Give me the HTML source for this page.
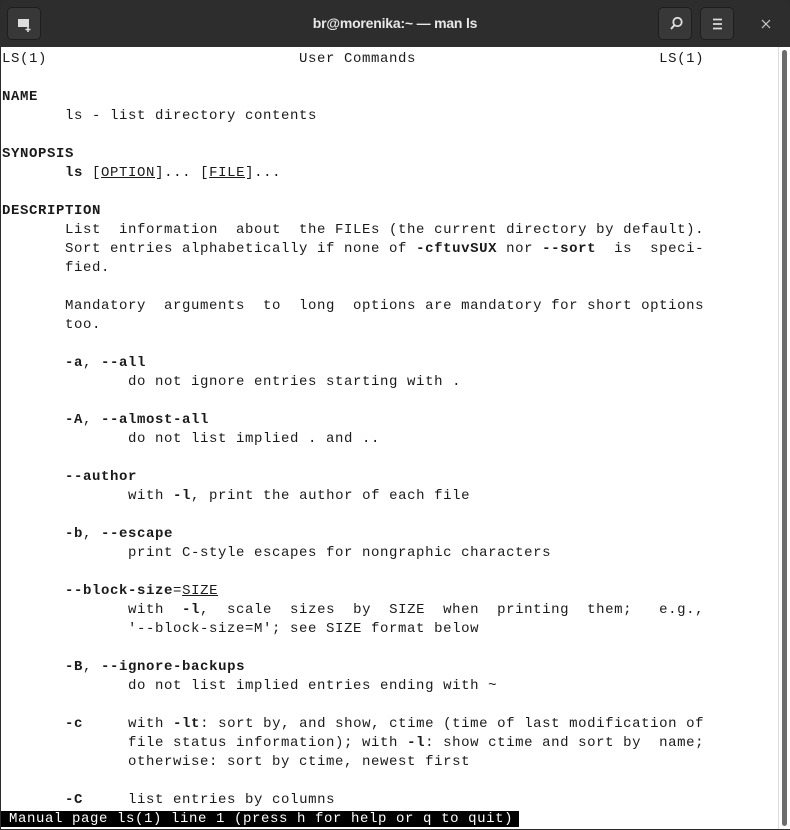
<!DOCTYPE html>
<html><head><meta charset="utf-8"><style>
html,body{margin:0;padding:0;width:790px;height:830px;overflow:hidden;background:#2b2b2b}
.tb{position:absolute;left:0;top:0;width:790px;height:47px;background:#2d2d2d;border-radius:8px 8px 0 0}
.title{position:absolute;left:0;right:0;top:15px;text-align:center;color:#e8e8e8;font:bold 14px "Liberation Sans",sans-serif;letter-spacing:-0.2px}
.btn{position:absolute;top:7px;width:34px;height:33px;background:#383838;border-radius:5px;border:1px solid #1e1e1e;box-sizing:border-box}
.content{position:absolute;left:1px;top:47px;width:777px;height:782px;background:#fff}
.sb{position:absolute;left:778px;top:47px;width:11px;height:782px;background:#fff;border-left:1px solid #ddd}
.thumb{position:absolute;left:782px;top:50px;width:5px;height:776px;background:#6c6c6c;border-radius:3px}
pre{position:absolute;left:2px;top:50px;margin:0;font:14px/19px "Liberation Mono","DejaVu Sans Mono",monospace;letter-spacing:0.6px;color:#1a1a1a}
b{font-weight:bold}
.st{background:#000;color:#fff;padding:0 6px 0 8px;margin-left:-1px}
</style></head><body>
<div class="tb">
<div class="btn" style="left:7px"><svg width="34" height="33" viewBox="0 0 34 33"><path d="M10 11h11v8h-11z" fill="#ddd"/><path d="M20 19v5M17.5 21.5h5" stroke="#ddd" stroke-width="1.6"/></svg></div>
<div class="title">br@morenika:~ — man ls</div>
<div class="btn" style="left:658px"><svg width="34" height="33" viewBox="0 0 34 33"><circle cx="18.5" cy="14" r="4.2" fill="none" stroke="#ddd" stroke-width="1.8"/><path d="M15.5 17l-3.5 4" stroke="#ddd" stroke-width="2"/></svg></div>
<div class="btn" style="left:700px"><svg width="34" height="33" viewBox="0 0 34 33"><path d="M12 11.5h9M12 16h9M12 20.5h9" stroke="#ddd" stroke-width="1.8"/></svg></div>
<svg style="position:absolute;left:761px;top:19px" width="10" height="10"><path d="M1 1l8 8M9 1l-8 8" stroke="#ccc" stroke-width="1.2"/></svg>
</div>
<div class="content"></div>
<div class="sb"></div><div class="thumb"></div>
<pre>LS(1)                            User Commands                           LS(1)

<b>NAME</b>
       ls - list directory contents

<b>SYNOPSIS</b>
       <b>ls</b> [<u>OPTION</u>]... [<u>FILE</u>]...

<b>DESCRIPTION</b>
       List  information  about  the FILEs (the current directory by default).
       Sort entries alphabetically if none of <b>-cftuvSUX</b> nor <b>--sort</b>  is  speci‐
       fied.

       Mandatory  arguments  to  long  options are mandatory for short options
       too.

       <b>-a</b>, <b>--all</b>
              do not ignore entries starting with .

       <b>-A</b>, <b>--almost-all</b>
              do not list implied . and ..

       <b>--author</b>
              with <b>-l</b>, print the author of each file

       <b>-b</b>, <b>--escape</b>
              print C-style escapes for nongraphic characters

       <b>--block-size</b>=<u>SIZE</u>
              with  <b>-l</b>,  scale  sizes  by  SIZE  when  printing  them;   e.g.,
              '--block-size=M'; see SIZE format below

       <b>-B</b>, <b>--ignore-backups</b>
              do not list implied entries ending with ~

       <b>-c</b>     with <b>-lt</b>: sort by, and show, ctime (time of last modification of
              file status information); with <b>-l</b>: show ctime and sort by  name;
              otherwise: sort by ctime, newest first

       <b>-C</b>     list entries by columns
<span class="st">Manual page ls(1) line 1 (press h for help or q to quit)</span></pre>
</body></html>
